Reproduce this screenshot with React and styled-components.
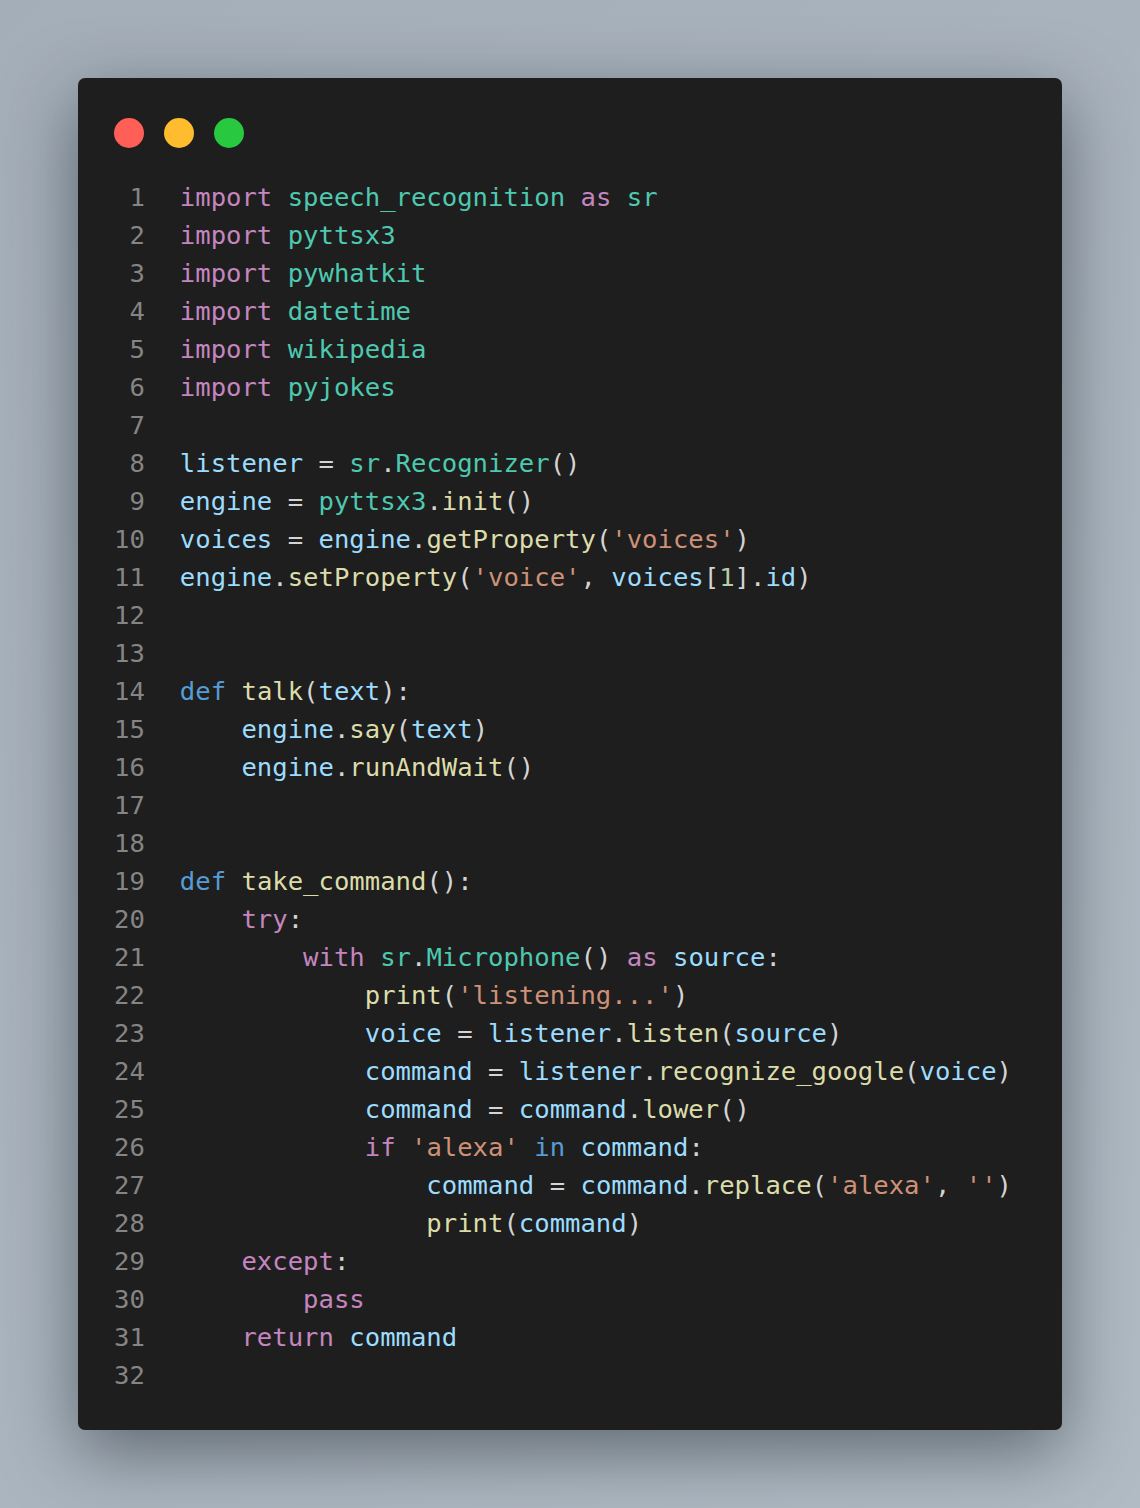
import React from 'react';
import styled, { createGlobalStyle } from 'styled-components';

const GlobalStyle = createGlobalStyle`
	html, body {
		margin: 0;
		padding: 0;
	}
	body {
		background: linear-gradient(135deg, #a4aeb8 0%, #aab4be 50%, #b0bbc4 100%);
		min-height: 1508px;
	}
`;

const colors = {
	k: '#c586c0',
	d: '#569cd6',
	m: '#4ec9b0',
	v: '#9cdcfe',
	f: '#dcdcaa',
	s: '#ce9178',
	n: '#b5cea8',
	p: '#d4d4d4',
};

const Page = styled.div`
	box-sizing: border-box;
	width: 1140px;
	height: 1508px;
	padding: 78px;
`;

const Window = styled.div`
	box-sizing: border-box;
	width: 984px;
	height: 1352px;
	background: #1e1e1e;
	border-radius: 7px;
	padding: 40px 36px 36px 36px;
	box-shadow: 0 22px 70px rgba(20, 28, 36, 0.5);
`;

const Dots = styled.div`
	display: flex;
	gap: 20px;
	margin-bottom: 30px;
`;

const Dot = styled.span`
	width: 30px;
	height: 30px;
	border-radius: 50%;
	background: ${(props) => props.$color};
`;

const Code = styled.div`
	display: grid;
	grid-template-columns: 2ch 1fr;
	column-gap: 35px;
	font-family: 'DejaVu Sans Mono', 'Liberation Mono', monospace;
	font-size: 25.6px;
	line-height: 38px;
`;

const LineNo = styled.span`
	color: #858585;
	text-align: right;
`;

const Line = styled.span`
	white-space: pre;
	color: #d4d4d4;
`;

const Token = styled.span`
	color: ${(props) => colors[props.$kind]};
`;

// each line: list of [kind, text]
const lines = [
	[['k', 'import'], ['p', ' '], ['m', 'speech_recognition'], ['p', ' '], ['k', 'as'], ['p', ' '], ['m', 'sr']],
	[['k', 'import'], ['p', ' '], ['m', 'pyttsx3']],
	[['k', 'import'], ['p', ' '], ['m', 'pywhatkit']],
	[['k', 'import'], ['p', ' '], ['m', 'datetime']],
	[['k', 'import'], ['p', ' '], ['m', 'wikipedia']],
	[['k', 'import'], ['p', ' '], ['m', 'pyjokes']],
	[],
	[['v', 'listener'], ['p', ' = '], ['m', 'sr'], ['p', '.'], ['m', 'Recognizer'], ['p', '()']],
	[['v', 'engine'], ['p', ' = '], ['m', 'pyttsx3'], ['p', '.'], ['f', 'init'], ['p', '()']],
	[['v', 'voices'], ['p', ' = '], ['v', 'engine'], ['p', '.'], ['f', 'getProperty'], ['p', '('], ['s', "'voices'"], ['p', ')']],
	[['v', 'engine'], ['p', '.'], ['f', 'setProperty'], ['p', '('], ['s', "'voice'"], ['p', ', '], ['v', 'voices'], ['p', '['], ['n', '1'], ['p', '].'], ['v', 'id'], ['p', ')']],
	[],
	[],
	[['d', 'def'], ['p', ' '], ['f', 'talk'], ['p', '('], ['v', 'text'], ['p', '):']],
	[['p', '    '], ['v', 'engine'], ['p', '.'], ['f', 'say'], ['p', '('], ['v', 'text'], ['p', ')']],
	[['p', '    '], ['v', 'engine'], ['p', '.'], ['f', 'runAndWait'], ['p', '()']],
	[],
	[],
	[['d', 'def'], ['p', ' '], ['f', 'take_command'], ['p', '():']],
	[['p', '    '], ['k', 'try'], ['p', ':']],
	[['p', '        '], ['k', 'with'], ['p', ' '], ['m', 'sr'], ['p', '.'], ['m', 'Microphone'], ['p', '() '], ['k', 'as'], ['p', ' '], ['v', 'source'], ['p', ':']],
	[['p', '            '], ['f', 'print'], ['p', '('], ['s', "'listening...'"], ['p', ')']],
	[['p', '            '], ['v', 'voice'], ['p', ' = '], ['v', 'listener'], ['p', '.'], ['f', 'listen'], ['p', '('], ['v', 'source'], ['p', ')']],
	[['p', '            '], ['v', 'command'], ['p', ' = '], ['v', 'listener'], ['p', '.'], ['f', 'recognize_google'], ['p', '('], ['v', 'voice'], ['p', ')']],
	[['p', '            '], ['v', 'command'], ['p', ' = '], ['v', 'command'], ['p', '.'], ['f', 'lower'], ['p', '()']],
	[['p', '            '], ['k', 'if'], ['p', ' '], ['s', "'alexa'"], ['p', ' '], ['d', 'in'], ['p', ' '], ['v', 'command'], ['p', ':']],
	[['p', '                '], ['v', 'command'], ['p', ' = '], ['v', 'command'], ['p', '.'], ['f', 'replace'], ['p', '('], ['s', "'alexa'"], ['p', ', '], ['s', "''"], ['p', ')']],
	[['p', '                '], ['f', 'print'], ['p', '('], ['v', 'command'], ['p', ')']],
	[['p', '    '], ['k', 'except'], ['p', ':']],
	[['p', '        '], ['k', 'pass']],
	[['p', '    '], ['k', 'return'], ['p', ' '], ['v', 'command']],
	[],
];

export default function App() {
	return (
		<Page>
			<GlobalStyle />
			<Window>
				<Dots>
					<Dot $color="#ff5f57" />
					<Dot $color="#febc2e" />
					<Dot $color="#28c840" />
				</Dots>
				<Code>
					{lines.map((tokens, i) => (
						<React.Fragment key={i}>
							<LineNo>{i + 1}</LineNo>
							<Line>
								{tokens.length === 0
									? ' '
									: tokens.map(([kind, text], j) => (
											<Token key={j} $kind={kind}>
												{text}
											</Token>
									  ))}
							</Line>
						</React.Fragment>
					))}
				</Code>
			</Window>
		</Page>
	);
}
